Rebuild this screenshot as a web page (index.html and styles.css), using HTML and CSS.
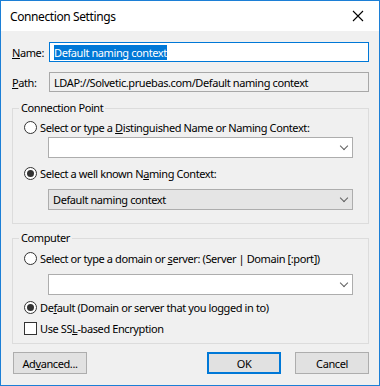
FILE: index.html
```html
<!DOCTYPE html>
<html lang="en">
<head>
  <meta charset="UTF-8" />
  <title>Connection Settings</title>
  <link rel="stylesheet" href="styles.css">
</head>
<body>
  <div class="window">
    <div class="titlebar">
      <span class="title">Connection Settings</span>
      <span class="close">
        <svg width="12" height="12" viewBox="0 0 12 12"><path d="M1 1L11 11M11 1L1 11" stroke="#000" stroke-width="1.1" fill="none"/></svg>
      </span>
    </div>

    <div class="content">
      <div class="field-row">
        <label class="field-label"><u>N</u>ame:</label>
        <div class="edit focused"><span class="selected">Default naming context</span></div>
      </div>
      <div class="field-row path-row">
        <label class="field-label"><u>P</u>ath:</label>
        <div class="edit readonly">LDAP://Solvetic.pruebas.com/Default naming context</div>
      </div>

      <fieldset class="group group-first">
        <legend>Connection Point</legend>
        <div class="option first-option">
          <span class="radio"></span>
          <span>Select or type a <u>D</u>istinguished Name or Naming Context:</span>
        </div>
        <div class="combo"><span class="combo-text"></span><span class="chevron"></span></div>
        <div class="option second-option">
          <span class="radio checked"></span>
          <span>Select a well known N<u>a</u>ming Context:</span>
        </div>
        <div class="combo dropdown"><span class="combo-text">Default naming context</span><span class="chevron"></span></div>
      </fieldset>

      <fieldset class="group group-second">
        <legend>Computer</legend>
        <div class="option first-option">
          <span class="radio"></span>
          <span>Select or type a domain or <u>s</u>erver: (Server | Domain [:port])</span>
        </div>
        <div class="combo"><span class="combo-text"></span><span class="chevron"></span></div>
        <div class="option third-option">
          <span class="radio checked"></span>
          <span>De<u>f</u>ault (Domain or server that you logged in to)</span>
        </div>
        <div class="option check-option">
          <span class="checkbox"></span>
          <span>Use SS<u>L</u>-based Encryption</span>
        </div>
      </fieldset>

      <div class="buttons">
        <button class="btn">Ad<u>v</u>anced...</button>
        <span class="spacer"></span>
        <button class="btn default">OK</button>
        <button class="btn">Cancel</button>
      </div>
    </div>
  </div>
</body>
</html>
```

FILE: styles.css
```css
* {
  box-sizing: border-box;
  margin: 0;
  padding: 0;
}

body {
  font-family: 'Noto Sans', 'DejaVu Sans', sans-serif;
  font-size: 11px;
  letter-spacing: -0.4px;
  color: #000;
}

u {
  text-decoration: underline;
  text-underline-offset: 1px;
}

.window {
  width: 380px;
  height: 386px;
  border: 1px solid #1c7fd6;
  background: #f0f0f0;
  display: flex;
  flex-direction: column;
}

.titlebar {
  height: 30px;
  background: #fff;
  display: flex;
  align-items: center;
  padding-left: 9px;
  font-size: 12px;
}

.title {
  flex: 1;
}

.close {
  width: 46px;
  height: 30px;
  display: flex;
  align-items: center;
  justify-content: center;
  margin-right: -2px;
}

.content {
  flex: 1;
  padding: 11px 10px 0 11px;
}

.field-row {
  display: flex;
  align-items: center;
  height: 20px;
}

.path-row {
  margin-top: 10px;
}

.field-label {
  width: 37px;
  flex-shrink: 0;
}

.edit {
  flex: 1;
  height: 20px;
  border: 1px solid #7a7a7a;
  background: #fff;
  padding-left: 4px;
  display: flex;
  align-items: center;
  white-space: nowrap;
}

.edit.focused {
  border-color: #0078d7;
}

.edit.readonly {
  background: #f0f0f0;
  border-color: #a8a8a8;
}

.selected {
  background: #0078d7;
  color: #fff;
  line-height: 15px;
}

.group {
  border: 1px solid #dcdcdc;
  padding: 0;
}

.group legend {
  margin-left: 6px;
  padding: 0 2px;
  line-height: 16px;
}

.group-first {
  margin-top: 8px;
  padding-bottom: 13px;
}

.group-second {
  margin-top: 6px;
  padding-bottom: 7px;
}

.option {
  display: flex;
  align-items: center;
  height: 16px;
  padding-left: 11px;
  gap: 3px;
}

.group-first .first-option {
  margin-top: 3px;
}

.group-second .first-option {
  margin-top: 4px;
}

.second-option {
  margin-top: 7px;
}

.third-option {
  margin-top: 4px;
}

.check-option {
  margin-top: 5px;
}

.radio {
  width: 13px;
  height: 13px;
  border: 1px solid #333;
  border-radius: 50%;
  background: #fff;
  display: flex;
  align-items: center;
  justify-content: center;
  flex-shrink: 0;
}

.radio.checked::after {
  content: '';
  width: 7px;
  height: 7px;
  border-radius: 50%;
  background: #333;
}

.checkbox {
  width: 13px;
  height: 13px;
  border: 1px solid #333;
  background: #fff;
  flex-shrink: 0;
}

.combo {
  width: 305px;
  height: 21px;
  margin-left: 35px;
  margin-top: 2px;
  border: 1px solid #adadad;
  background: #fff;
  display: flex;
  align-items: center;
  padding-left: 4px;
}

.group-second .combo {
  margin-top: 8px;
}

.combo.dropdown {
  background: #e5e5e5;
  margin-top: 8px;
}

.combo-text {
  flex: 1;
}

.chevron {
  width: 17px;
  height: 100%;
  display: flex;
  align-items: center;
  justify-content: center;
}

.chevron::after {
  content: '';
  width: 5px;
  height: 5px;
  border-right: 1px solid #606060;
  border-bottom: 1px solid #606060;
  transform: translateY(-2px) rotate(45deg);
}

.buttons {
  display: flex;
  margin-top: 8px;
  padding-left: 1px;
  gap: 14px;
}

.spacer {
  flex: 1;
}

.btn {
  width: 74px;
  height: 22px;
  font: inherit;
  letter-spacing: inherit;
  background: #e1e1e1;
  border: 1px solid #adadad;
  color: #000;
}

.btn.default {
  border-color: #0078d7;
  box-shadow: inset 0 0 0 1px #0078d7;
}
```
